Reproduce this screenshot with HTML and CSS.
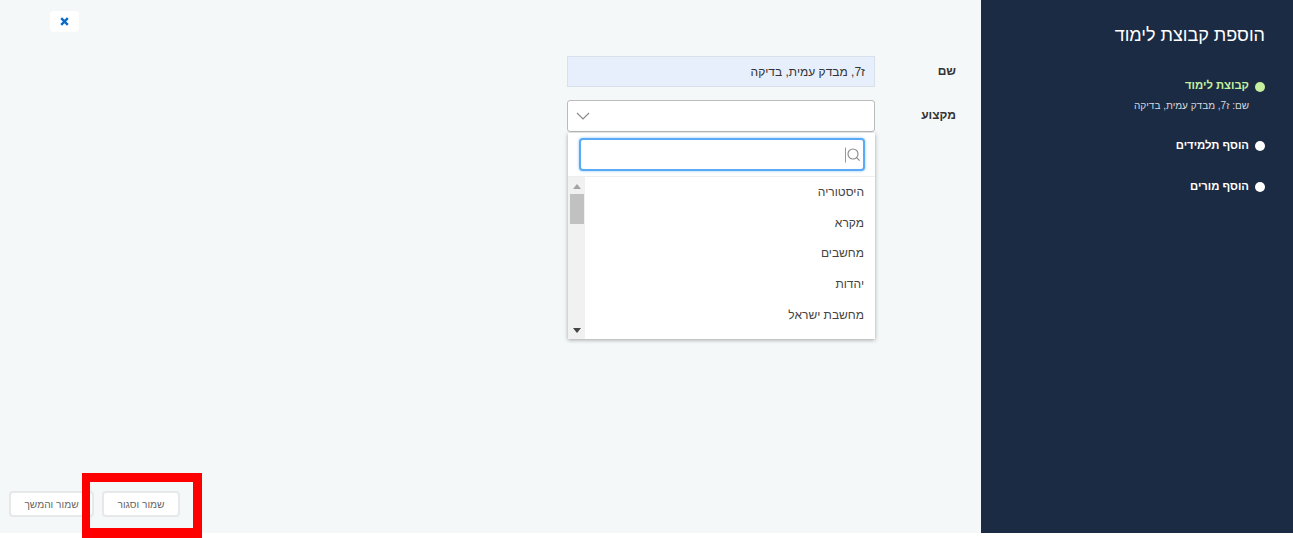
FILE: index.html
```html
<!DOCTYPE html>
<html lang="he" dir="rtl">
<head>
<meta charset="utf-8">
<title>הוספת קבוצת לימוד</title>
<link rel="stylesheet" href="styles.css">
</head>
<body>
<div class="app">
  <aside class="sidebar">
    <h1 class="title">הוספת קבוצת לימוד</h1>
    <ul class="steps">
      <li class="step step-active">
        <div class="step-head"><span class="dot"></span><span class="step-name">קבוצת לימוד</span></div>
        <div class="step-sub">שם: ז7, מבדק עמית, בדיקה</div>
      </li>
      <li class="step step-second">
        <div class="step-head"><span class="dot"></span><span class="step-name">הוסף תלמידים</span></div>
      </li>
      <li class="step step-third">
        <div class="step-head"><span class="dot"></span><span class="step-name">הוסף מורים</span></div>
      </li>
    </ul>
  </aside>
  <main class="main">
    <form class="form">
      <div class="row row-name">
        <label class="label">שם</label>
        <div class="readonly">ז7, מבדק עמית, בדיקה</div>
      </div>
      <div class="row row-subject">
        <label class="label">מקצוע</label>
        <div class="select-wrap">
          <div class="select">
            <svg class="chevron" width="14" height="8" viewBox="0 0 14 8"><path d="M1 1l6 6 6-6" fill="none" stroke="#888" stroke-width="1.1"/></svg>
          </div>
          <div class="dropdown">
            <div class="search-area">
              <div class="search">
                <svg class="search-icon" width="15" height="16" viewBox="0 0 15 16"><path d="M.5 .5v15" stroke="#999" stroke-width="1" fill="none"/><circle cx="8" cy="7" r="5" fill="none" stroke="#888" stroke-width="1.1"/><path d="M11.6 10.6l3 3" stroke="#888" stroke-width="1.2" fill="none"/></svg>
              </div>
            </div>
            <div class="list-area">
              <ul class="options">
                <li>היסטוריה</li>
                <li>מקרא</li>
                <li>מחשבים</li>
                <li>יהדות</li>
                <li>מחשבת ישראל</li>
              </ul>
              <div class="scrollbar">
                <span class="arrow-up"></span>
                <span class="thumb"></span>
                <span class="arrow-down"></span>
              </div>
            </div>
          </div>
        </div>
      </div>
    </form>
    <div class="close-wrap">
      <button class="close" type="button" aria-label="סגור">
        <svg width="9" height="9" viewBox="0 0 9 9"><path d="M1.2 1.2l6.6 6.6M7.8 1.2L1.2 7.8" stroke="#0b6bcb" stroke-width="2.4" fill="none"/></svg>
      </button>
    </div>
    <div class="actions">
      <button class="btn btn-close" type="button">שמור וסגור</button>
      <button class="btn btn-next" type="button">שמור והמשך</button>
    </div>
    <div class="highlight"></div>
  </main>
</div>
</body>
</html>
```

FILE: styles.css
```css
* { box-sizing: border-box; }
html, body { margin: 0; padding: 0; background: #fff; }
body { font-family: "Liberation Sans", Arial, sans-serif; color: #333; height: 538px; overflow: hidden; }
.app { display: flex; height: 533px; direction: rtl; }

.sidebar { width: 312px; background: #1c2b44; color: #fff; padding: 23px 28px 0 0; flex: none; }
.title { margin: 0; font-size: 18px; line-height: 24px; font-weight: 400; }
.steps { list-style: none; margin: 30px 0 0; padding: 0; }
.step-head { display: flex; align-items: center; gap: 6px; height: 16px; }
.dot { width: 10px; height: 10px; border-radius: 50%; background: #fff; flex: none; position: relative; top: 1px; }
.step-name { font-size: 11.3px; font-weight: 700; line-height: 16px; }
.step-active .dot { background: #c6ef9e; top: 2px; }
.step-active .step-name { color: #c6ef9e; }
.step-sub { margin: 6px 16px 0 0; font-size: 10px; line-height: 14px; color: #d5d9df; }
.step-second { margin-top: 24px; }
.step-third { margin-top: 25px; }

.main { flex: 1; background: #f5f8f9; position: relative; display: flex; flex-direction: column; padding: 56px 0 0; }
.form { display: flex; flex-direction: column; padding-right: 25px; }
.row { display: flex; align-items: flex-start; }
.row-subject { margin-top: 13px; }
.label { width: 81px; flex: none; font-size: 12px; font-weight: 700; line-height: 31px; color: #333; }
.readonly { width: 308px; height: 31px; background: #e7effc; border: 1px solid #d8e0ea; font-size: 12px; line-height: 30px; padding: 0 9px; color: #333; }
.select-wrap { width: 308px; position: relative; }
.select { height: 32px; background: #fff; border: 1px solid #bbb; border-radius: 3px; display: flex; align-items: center; justify-content: flex-end; padding-left: 8px; }
.dropdown { position: absolute; top: 33px; left: 1px; right: 0; height: 206px; background: #fff; box-shadow: 0 1px 4px rgba(0,0,0,.35); z-index: 2; display: flex; flex-direction: column; }
.search-area { height: 44px; padding: 5px 10px 0 11px; border-bottom: 1px solid #eee; flex: none; }
.search { height: 33px; background: #fff; border: 2px solid #5aaaf5; border-radius: 4px; box-shadow: 0 0 3px #8cc6fb; display: flex; align-items: center; padding-right: 3px; }
.list-area { flex: 1; display: flex; min-height: 0; }
.options { list-style: none; flex: 1; margin: 0; padding: 0; }
.options li { height: 30.65px; line-height: 30px; font-size: 12px; padding-right: 11px; color: #444; }
.scrollbar { width: 17px; flex: none; background: #f1f1f1; display: flex; flex-direction: column; align-items: center; position: relative; }
.arrow-up { width: 0; height: 0; margin-top: 7px; border: 4px solid transparent; border-top: 0; border-bottom: 5px solid #a3a3a3; }
.thumb { width: 14px; height: 30px; background: #c1c1c1; margin-top: 5px; }
.arrow-down { width: 0; height: 0; margin-top: auto; margin-bottom: 6px; border: 4px solid transparent; border-bottom: 0; border-top: 5px solid #444; }

.close-wrap { position: absolute; top: 11px; left: 50px; }
.close { width: 29px; height: 21px; background: #fff; border: 0; border-radius: 4px; padding: 0; display: flex; align-items: center; justify-content: center; }

.actions { margin-top: auto; display: flex; flex-direction: row; gap: 8px; padding: 0 801px 16px 0; direction: rtl; }
.btn { font-family: inherit; height: 26px; font-size: 10.2px; color: #666; background: #fff; border: 2px solid #e6e8ea; border-radius: 4px; padding: 0; flex: none; }
.btn-close { width: 78px; }
.btn-next { width: 85px; }

.highlight { position: absolute; left: 82px; top: 473px; width: 120px; height: 65px; border: solid #f00; border-width: 9px 9px 10px 8px; }
```
